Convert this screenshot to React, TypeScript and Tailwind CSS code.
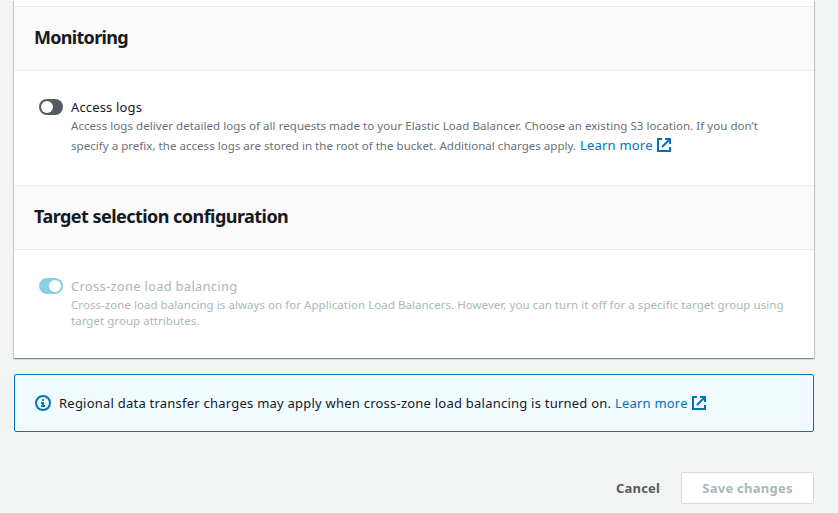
import type { ReactNode } from "react";

function ExternalIcon() {
  return (
    <svg width="16" height="16" viewBox="0 0 16 16" fill="none" stroke="#0073bb" strokeWidth="2" className="shrink-0">
      <path d="M6 2H2v12h12v-4" />
      <path d="M9 2h5v5M14 2L6 10" />
    </svg>
  );
}

function LearnMore() {
  return (
    <a className="flex items-center text-[#0073bb]">
      <span className="w-[76px] whitespace-nowrap text-[13px] leading-5 tracking-[0.2px]">Learn more</span>
      <ExternalIcon />
    </a>
  );
}

function SectionHeader({ children, tracking }: { children: ReactNode; tracking: string }) {
  return (
    <div className="flex h-[65px] items-center border-y border-[#eaeded] bg-[#fafafa] px-5 pb-1">
      <h2 className={`whitespace-nowrap text-[18px] leading-[22px] font-bold text-[#16191f] ${tracking}`}>{children}</h2>
    </div>
  );
}

function Toggle({ on }: { on?: boolean }) {
  return (
    <span className={on ? "flex h-4 w-6 shrink-0 items-center justify-end rounded-full bg-[#89cfe5] px-0.5" : "flex h-4 w-6 shrink-0 items-center rounded-full bg-[#545b64] px-0.5"}>
      <span className="size-3 rounded-full bg-white" />
    </span>
  );
}

export default function App() {
  return (
    <div className="h-[513px] w-full overflow-hidden bg-[#f2f3f3] px-3.5 font-['Noto_Sans','Open_Sans',sans-serif] text-[#16191f]">
      <div className="w-[800px]">
        <main className="h-[358px] bg-white pt-1.5 shadow-[0_1px_1px_0_rgba(0,28,36,0.3),1px_1px_1px_0_rgba(0,28,36,0.15),-1px_1px_1px_0_rgba(0,28,36,0.15)]">
          <SectionHeader tracking="tracking-[-0.7px]">Monitoring</SectionHeader>
          <section className="flex h-[114px] gap-2 pt-7 pl-[25px]">
            <Toggle />
            <div className="-mt-0.5 whitespace-nowrap">
              <div className="text-[13px] leading-5 tracking-[0.15px]">Access logs</div>
              <p className="text-[11.5px] leading-[18px] tracking-[0.057px] text-[#687078]">Access logs deliver detailed logs of all requests made to your Elastic Load Balancer. Choose an existing S3 location. If you don’t</p>
              <div className="flex h-5 items-start">
                <p className="w-[509px] pt-px text-[11.5px] leading-5 tracking-[0.035px] text-[#687078]">specify a prefix, the access logs are stored in the root of the bucket. Additional charges apply.</p>
                <LearnMore />
              </div>
            </div>
          </section>
          <SectionHeader tracking="tracking-[-0.54px]">Target selection configuration</SectionHeader>
          <section className="flex gap-2 pt-7 pl-[25px] text-[#aab7b8]">
            <Toggle on />
            <div className="-mt-0.5 whitespace-nowrap">
              <div className="mb-px text-[13px] leading-5 tracking-[0.26px]">Cross-zone load balancing</div>
              <p className="text-[11.5px] leading-4 tracking-[0.047px]">Cross-zone load balancing is always on for Application Load Balancers. However, you can turn it off for a specific target group using</p>
              <p className="text-[11.5px] leading-4 tracking-[0.04px]">target group attributes.</p>
            </div>
          </section>
        </main>
        <aside className="mt-4 flex h-[58px] items-center rounded-[2px] border border-[#0073bb] bg-[#f0faff] pl-5">
          <svg width="16" height="16" viewBox="0 0 16 16" fill="none" stroke="#0073bb" strokeWidth="2" className="mr-2 shrink-0">
            <circle cx="8" cy="8" r="7" />
            <path d="M8 4v2M6 8h2v3M6 11h4" strokeWidth="1.8" />
          </svg>
          <span className="w-[556px] whitespace-nowrap text-[13px] leading-5 tracking-[0.23px]">Regional data transfer charges may apply when cross-zone load balancing is turned on.</span>
          <LearnMore />
        </aside>
        <footer className="mt-10 flex h-8 items-center justify-end text-[13px] font-bold">
          <button className="mr-5 w-[45px] whitespace-nowrap pt-0.5 text-left tracking-[0.2px] text-[#545b64]">Cancel</button>
          <button className="flex h-8 w-[133px] items-center justify-center rounded-[2px] border border-[#d5dbdb] bg-white pt-0.5 whitespace-nowrap tracking-[0.25px] text-[#aab7b8]">Save changes</button>
        </footer>
      </div>
    </div>
  );
}
